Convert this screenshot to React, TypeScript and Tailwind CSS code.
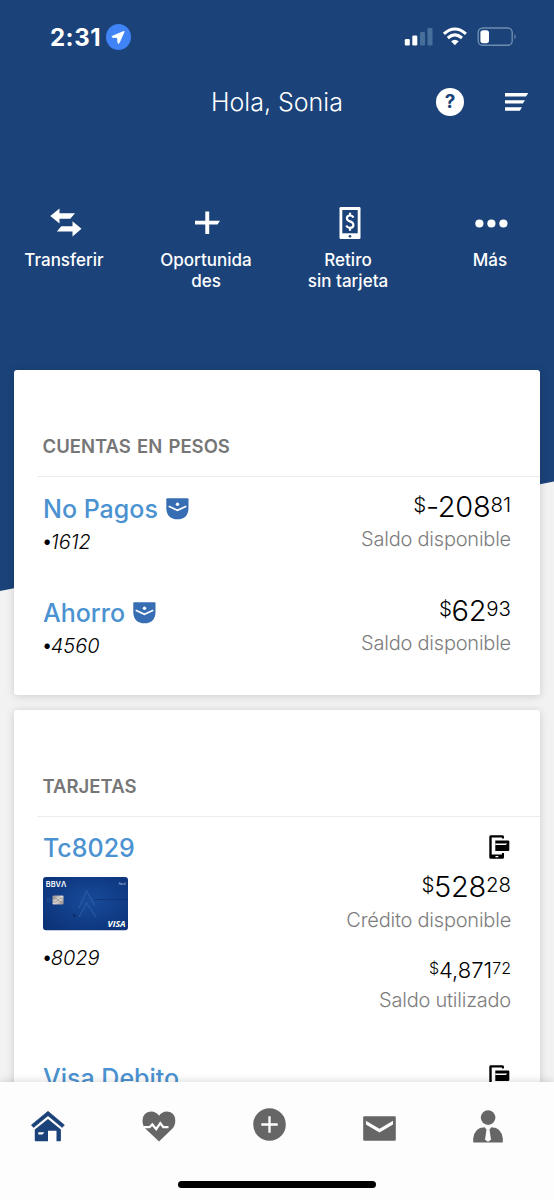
import * as React from "react";

type Account = { name: string; last4: string; whole: string; cents: string };

const accounts: Account[] = [
  { name: "No Pagos", last4: "1612", whole: "-208", cents: "81" },
  { name: "Ahorro", last4: "4560", whole: "62", cents: "93" },
];

function NavigationArrow() {
  return (
    <svg width="25" height="26" viewBox="0 0 25 26">
      <ellipse cx="12.5" cy="13" rx="12.5" ry="13" fill="#3f83f7" />
      <path d="M18 7.3 L6.2 12.3 Q5.6 13 6.4 13.3 L11.5 13.7 L11.9 19 Q12.3 20 13 19.2 L18.2 7.8Z" fill="#fff" stroke="#fff" strokeWidth="0.8" strokeLinejoin="round" />
    </svg>
  );
}

function StatusIcons() {
  return (
    <svg width="114" height="20" viewBox="0 0 114 20" fill="#fff">
      <rect x="0.8" y="12" width="5" height="6.5" rx="1.3" />
      <rect x="8.3" y="8.5" width="5" height="10" rx="1.3" />
      <g fill="#466f9b">
        <rect x="16" y="5" width="5" height="13.5" rx="1.3" />
        <rect x="23.5" y="1" width="5" height="17.5" rx="1.3" />
      </g>
      <g fill="none" stroke="#fff" strokeWidth="3.1">
        <path d="M39.9 6.9 Q50.9 -2.9 61.9 6.9" />
        <path d="M43.8 11 Q50.9 4.9 58 11" />
      </g>
      <path d="M47.1 14.3 Q50.9 11.2 54.7 14.3 L50.9 18.3Z" />
      <rect x="74.2" y="1" width="34" height="17.3" rx="4.6" fill="none" stroke="#6e8db1" strokeWidth="1.4" />
      <rect x="76.4" y="3.2" width="8.6" height="13" rx="2.6" />
      <path d="M110.5 7 Q113.1 9.7 110.5 12.4Z" fill="#6e8db1" />
    </svg>
  );
}

function MenuIcon() {
  return (
    <svg width="24" height="18" viewBox="0 0 24 18" fill="#fff">
      <path d="M0 0H23.3L21 3.5H0Z M0 7.2H20L17.8 10.6H0Z M0 14.3H17L14.8 17.7H0Z" />
    </svg>
  );
}

function TransferIcon() {
  return (
    <svg width="32" height="30" viewBox="0 0 32 30" fill="#fff">
      <path d="M0.3 8 L9.5 0.5V5.3H25L20.3 10.8H9.5V15.5Z" />
      <path d="M31.5 20.8 L22.5 13.3V18.3H11.3L6.8 23.5H22.5V28.5Z" />
    </svg>
  );
}

function PlusIcon() {
  return (
    <svg width="25" height="24" viewBox="0 0 25 24" fill="#fff">
      <path d="M10.3 0.5H14.2V9.8H25L22.5 13.5H14.2V23H10.3V13.5H0V9.8H10.3Z" />
    </svg>
  );
}

function CashPhoneIcon() {
  return (
    <svg width="22" height="32" viewBox="0 0 22 32">
      <rect x="0.5" width="21" height="32" rx="1.2" fill="#fff" />
      <rect x="3.3" y="3" width="15.4" height="23.3" fill="#1b4379" />
      <path d="M14.4 10.6 Q13.5 8.5 11 8.5 Q7.9 8.5 7.9 11.3 Q7.9 13.4 11 14.4 Q14.4 15.6 14.4 18 Q14.4 20.8 11 20.8 Q8.2 20.8 7.4 18.5 M11 5.7V8.7 M11 20.6V23.8" fill="none" stroke="#fff" strokeWidth="2.2" />
      <circle cx="11" cy="29.2" r="1.3" fill="#1b4379" />
    </svg>
  );
}

function DotsIcon() {
  return (
    <svg width="33" height="9" viewBox="0 0 33 9" fill="#fff">
      <circle cx="4.4" cy="4.5" r="4.1" />
      <circle cx="16.4" cy="4.5" r="4.1" />
      <circle cx="28.4" cy="4.5" r="4.1" />
    </svg>
  );
}

function PocketIcon() {
  return (
    <svg width="23" height="22" viewBox="0 0 23 22">
      <path d="M1.2 0.3H21.5Q22.5 0.3 22.5 1.3V10.5Q22 21.3 11.5 21.3Q0.8 21.3 0.3 10.5V1.3Q0.3 0.3 1.2 0.3Z" fill="#376eb3" />
      <path d="M2.7 8.3 L11.4 12.2 L20.3 8.3" fill="none" stroke="#fff" strokeWidth="1.7" />
      <circle cx="11.5" cy="6.2" r="1.7" fill="#fff" />
    </svg>
  );
}

function DigitalCardIcon() {
  return (
    <svg className="mr-px" width="21" height="24" viewBox="0 0 21 24">
      <path d="M1.6 0.2H13.5Q15 0.2 15 1.7V3.6H12.9V2.4H2.7V19.6H12.9V18H15V22.3Q15 23.8 13.5 23.8H1.6Q0.3 23.8 0.3 22.3V1.7Q0.3 0.2 1.6 0.2Z" />
      <path d="M6.3 5.5H19.2Q20.3 5.5 20.3 6.6V15Q20.3 16 19.2 16H6.3Z" />
      <path d="M6.3 8.4H18.2L16.8 9.9H6.3Z M6.5 21H9.3V22.3H6.5Z" fill="#fff" />
    </svg>
  );
}

function CreditCard() {
  return (
    <svg className="block" width="86" height="54" viewBox="0 0 86 54">
      <defs>
        <radialGradient id="plastic" cx="0.55" cy="0.45" r="0.7">
          <stop offset="0" stopColor="#174b9b" />
          <stop offset="1" stopColor="#0c3277" />
        </radialGradient>
        <linearGradient id="chip" x1="0" x2="1" y2="1">
          <stop offset="0" stopColor="#8d8a8c" />
          <stop offset="0.5" stopColor="#ded9d5" />
          <stop offset="1" stopColor="#968b88" />
        </linearGradient>
      </defs>
      <rect width="85" height="53.3" rx="3" fill="url(#plastic)" />
      <path d="M36 31 L43.5 14 L52 29 M36 40 L43.5 26 L53 40" fill="none" stroke="#356ab1" strokeWidth="1.3" opacity="0.55" />
      <path d="M51 22.5H85" stroke="#0b2c6b" strokeWidth="0.6" />
      <path d="M30 36 L34 40 H30Z" fill="#0b2c6b" />
      <rect x="9.5" y="18.6" width="11" height="9" rx="1" fill="url(#chip)" />
      <path d="M9.5 21.3H13L17 25H20.5 M9.5 25H13L17 21.3H20.5" fill="none" stroke="#716967" strokeWidth="0.5" />
      <path d="M4 21 Q6 23 4 25 M6 20.5 Q8.5 23 6 25.5" fill="none" stroke="#3264aa" strokeWidth="0.7" opacity="0.7" />
      <text x="2.8" y="9.9" fill="#fff" fontFamily="Inter, sans-serif" fontWeight="600" fontSize="7.9" textLength="20.5" lengthAdjust="spacingAndGlyphs">BBVΛ</text>
      <text x="75.5" y="8.3" fill="#bfd0ea" fontFamily="Inter, sans-serif" fontSize="3.6" textLength="7">Azul</text>
      <text x="64.5" y="50" fill="#fff" fontFamily="Open Sans, sans-serif" fontWeight="700" fontStyle="italic" fontSize="8" textLength="18" lengthAdjust="spacingAndGlyphs">VISA</text>
    </svg>
  );
}

function HomeIcon() {
  return (
    <svg width="34" height="31" viewBox="0 0 34 31" fill="#1b4379">
      <path d="M17 0.3 L33.4 14 L31.2 16.5 L17 4.7 L2.6 16.5 L0.4 14Z" stroke="#1b4379" strokeWidth="0.6" strokeLinejoin="round" />
      <path d="M17 8 L29.9 18.6V29.5Q29.9 30.3 29.1 30.3H25.5V19.7H17V30.3H4.6Q3.8 30.3 3.8 29.5V18.6Z" />
      <path d="M7.3 21.3H13.2L11.6 23.5H7.3Z" fill="#fdfdfd" />
    </svg>
  );
}

function HealthIcon() {
  return (
    <svg width="34" height="31" viewBox="0 0 34 31">
      <path d="M17 30.5 L3.3 17.5 Q0.5 14.5 0.5 9.5 Q1 0.8 9 0.5 Q14.5 0.7 17 4.8 Q19.5 0.7 25 0.5 Q33 0.8 33.3 9.5 Q33.3 14.5 30.5 17.5Z" fill="#666" />
      <path d="M1.5 16.2H7.5L10.3 13.4L14.2 18.2L18.3 12.2L21.3 16.2H26.5" fill="none" stroke="#fdfdfd" strokeWidth="2.3" />
    </svg>
  );
}

function AddIcon() {
  return (
    <svg className="mb-[3px]" width="33" height="33" viewBox="0 0 33 33">
      <circle cx="16.5" cy="16.5" r="16.3" fill="#666" />
      <path d="M16.5 8.3V24.7M8.3 16.5H24.7" stroke="#fdfdfd" strokeWidth="2.3" />
    </svg>
  );
}

function MailIcon() {
  return (
    <svg className="ml-px mt-[5px]" width="33" height="25" viewBox="0 0 33 25">
      <rect x="0.2" y="0.2" width="32.6" height="24.6" rx="1.2" fill="#666" />
      <path d="M2.9 4.8 L16.5 12.7 L30 4.8V8.5L16.5 16.5L2.9 8.5Z" fill="#fdfdfd" />
    </svg>
  );
}

function ProfileIcon() {
  return (
    <svg width="30" height="33" viewBox="0 0 30 33" fill="#666">
      <circle cx="15.1" cy="7.6" r="7.3" />
      <path d="M0.2 32.5V28.5Q1.4 17.5 11.5 17.2L13.5 19.5L12 29.8L15 31.8L18 29.8L16.5 19.5L18.5 17.2Q28.6 17.5 29.8 28.5V32.5Z" />
    </svg>
  );
}

function Amount({ whole, cents }: { whole: string; cents: string }) {
  return (
    <p className="flex h-8 justify-end text-[29px] font-light leading-8 tracking-[-0.3px] text-black">
      <span className="text-[20.5px] leading-[27px]">$</span>
      {whole}
      <span className="text-[20.5px] leading-[27px] tracking-normal">{cents}</span>
    </p>
  );
}

function Caption({ children }: { children: React.ReactNode }) {
  return <p className="text-right text-[20px] font-light leading-8 tracking-[-0.22px] text-[#7d7d7d]">{children}</p>;
}

function CardNumber({ last4 }: { last4: string }) {
  return (
    <p className="-ml-[1.5px] flex text-[20px] font-light italic leading-8 text-black">
      <span className="-mt-px tracking-[-2px] not-italic">•</span>
      {last4}
    </p>
  );
}

function Section({ title, className, children }: { title: string; className: string; children: React.ReactNode }) {
  return (
    <section className={"mx-[14px] shrink-0 rounded-[3px] bg-white shadow-[0_1px_8px_rgba(0,0,0,0.16)] " + className}>
      <h2 className="h-[106px] pl-[28.5px] pt-[60px] text-[18.5px] font-semibold leading-8 text-[#767676] [word-spacing:1.5px]">{title}</h2>
      <div className="ml-[23px] h-px bg-[#ececec]" />
      {children}
    </section>
  );
}

const shortcuts = [
  { label: ["Transferir"], icon: <TransferIcon /> },
  { label: ["Oportunida", "des"], icon: <PlusIcon /> },
  { label: ["Retiro", "sin tarjeta"], icon: <CashPhoneIcon /> },
  { label: ["Más"], icon: <DotsIcon /> },
];

export default function App() {
  return (
    <div className="relative isolate flex h-[1200px] w-[554px] flex-col overflow-hidden bg-[#f2f2f2] font-['Inter',sans-serif]">
      <div className="absolute inset-x-0 top-0 -z-10 h-[591px] bg-[#1b4379] [clip-path:polygon(0_0,100%_0,100%_481.5px,0_100%)]" />

      <header className="h-[370px] shrink-0 text-white">
        <div className="flex h-[74px] items-center pl-[50px] pr-[36px]">
          <span className="w-[56px] pt-[2px] text-[24px] font-bold leading-none tracking-[0.5px]">2:31</span>
          <NavigationArrow />
          <div className="ml-auto">
            <StatusIcons />
          </div>
        </div>
        <div className="flex h-[56px] items-center justify-between pl-[211px] pr-[25px]">
          <h1 className="pt-[2px] text-[25px] font-light">Hola, Sonia</h1>
          <div className="flex items-center gap-[41px]">
            <span className="flex size-7 items-center justify-center rounded-full bg-white text-[19px] font-bold text-[#1b4379]">?</span>
            <MenuIcon />
          </div>
        </div>
        <nav className="-mx-[7px] grid grid-cols-4 pt-[76px]">
          {shortcuts.map((item) => (
            <div key={item.label[0]} className="flex flex-col items-center">
              <div className="flex h-[34px] items-center pl-[3px]">{item.icon}</div>
              <p className="pt-[10px] text-center text-[17px] font-medium leading-[21px]">
                {item.label.map((line) => (
                  <span key={line} className="block">{line}</span>
                ))}
              </p>
            </div>
          ))}
        </nav>
      </header>

      <Section title="CUENTAS EN PESOS" className="h-[325px]">
        {accounts.map((account) => (
          <div key={account.last4} className="flex h-[104px] justify-between px-[29px]">
            <div className="pt-4">
              <h3 className="mb-px flex items-center gap-2 text-[25px] font-medium leading-8 text-[#4b92d1]">
                {account.name}
                <PocketIcon />
              </h3>
              <CardNumber last4={account.last4} />
            </div>
            <div className="pt-[14px]">
              <Amount whole={account.whole} cents={account.cents} />
              <Caption>Saldo disponible</Caption>
            </div>
          </div>
        ))}
      </Section>

      <Section title="TARJETAS" className="mt-[15px] h-[500px]">
        <div className="flex h-[230px] justify-between px-[29px]">
          <div className="pt-[15px]">
            <h3 className="text-[25px] font-medium leading-8 text-[#4b92d1]">Tc8029</h3>
            <div className="mt-[13px]">
              <CreditCard />
            </div>
            <div className="mt-[11px]">
              <CardNumber last4="8029" />
            </div>
          </div>
          <div className="flex flex-col items-end pt-[18px]">
            <DigitalCardIcon />
            <div className="mb-px mt-[12px]">
              <Amount whole="528" cents="28" />
            </div>
            <Caption>Crédito disponible</Caption>
            <p className="mt-[18px] flex h-[30px] text-[22px] font-light leading-8 text-black">
              <span className="text-[16px] leading-[29px]">$</span>
              4,871
              <span className="text-[16px] leading-[29px]">72</span>
            </p>
            <Caption>Saldo utilizado</Caption>
          </div>
        </div>
        <div className="flex justify-between px-[29px]">
          <h3 className="pt-[15px] text-[25px] font-medium leading-8 text-[#4b92d1]">Visa Debito</h3>
          <div className="pt-[18px]">
            <DigitalCardIcon />
          </div>
        </div>
      </Section>

      <footer className="absolute inset-x-0 bottom-0 h-[118px] bg-[#fdfdfd] shadow-[0_-1px_8px_rgba(0,0,0,0.14)]">
        <div className="flex h-[88px] items-center justify-between pl-[31px] pr-[51px]">
          <HomeIcon />
          <HealthIcon />
          <AddIcon />
          <MailIcon />
          <ProfileIcon />
        </div>
        <div className="mx-auto mt-[11px] h-[7px] w-[198px] rounded-full bg-black" />
      </footer>
    </div>
  );
}
